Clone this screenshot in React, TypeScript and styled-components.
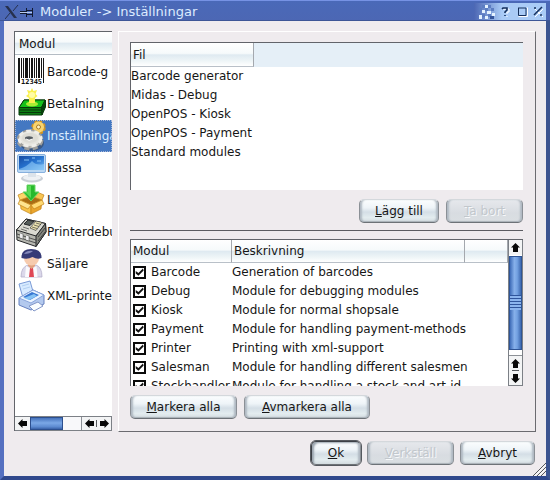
import React, { useState } from "react";
import styled, { createGlobalStyle, css } from "styled-components";

const GlobalStyle = createGlobalStyle`
  * { box-sizing: border-box; }
  body {
    margin: 0;
    background: #efebee;
    color: #161616;
    font: 12px/19px "DejaVu Sans", Verdana, sans-serif;
  }
  button { font: inherit; color: inherit; }
`;

const headerFill = "linear-gradient(#ffffff 0%, #f6fafb 45%, #dfeaf1 52%, #eef5f7 78%, #ffffff 100%)";

const Window = styled.div`
  display: flex;
  flex-direction: column;
  height: 100vh;
  min-height: 400px;
  border: solid;
  border-width: 0 4px 4px;
  border-color: #4a66b0 #3c5490 #30488c #5570c0;
  background: #efebee;
  position: relative;
`;

const TitleBar = styled.header`
  display: flex;
  align-items: center;
  height: 21px;
  margin: 0 -4px;
  padding: 2px 4px 0 5px;
  border-top: 1px solid #7692e4;
  border-bottom: 1px solid #3d5596;
  background: linear-gradient(#4a69b8, #4c67b4);
`;

const Title = styled.h1`
  flex: 1;
  margin: 0 0 0 6px;
  color: #dcebff;
  font-size: 13px;
  font-weight: normal;
  line-height: 18px;
`;

const TitleControls = styled.div`
  display: flex;
  align-items: center;
  height: 17px;
  padding-left: 4px;
  background: linear-gradient(90deg, #4c67b4, #a9cbf6 28px);
`;

const TitleButton = styled.button`
  display: flex;
  align-items: center;
  justify-content: center;
  width: 16px;
  height: 17px;
  padding: 0;
  border: 0;
  background: none;
`;

const Content = styled.main`
  display: flex;
  flex: 1;
  gap: 6px;
  min-height: 0;
  padding: 10px 10px 0;
`;

const sunken = css`
  border: solid;
  border-width: 1px 0 0 1px;
  border-color: #62646a;
  background: #fff;
`;

const Sidebar = styled.nav`
  ${sunken}
  display: flex;
  flex-direction: column;
  flex: none;
  width: 98px;
  margin-bottom: 1px;
`;

const SidebarHeader = styled.div`
  flex: none;
  height: 23px;
  padding: 3px 4px;
  border-bottom: 1px solid #b4bcc4;
  background: ${headerFill};
`;

const ModuleList = styled.ul`
  flex: 1;
  min-height: 0;
  margin: 0;
  padding: 1px 0 0;
  overflow: hidden;
  list-style: none;
`;

const ModuleButton = styled.button<{ $active: boolean }>`
  display: flex;
  align-items: center;
  width: 100%;
  height: 32px;
  padding: 0;
  overflow: hidden;
  border: 0;
  background: ${(p) => (p.$active ? "#4478c2" : "transparent")};
  color: ${(p) => (p.$active ? "#d9ecff" : "inherit")};
  outline: ${(p) => (p.$active ? "1px dotted #a8b8d8" : "none")};
  outline-offset: -1px;
  white-space: nowrap;
  text-align: left;
  svg { flex: none; }
`;

const HScroll = styled.div`
  display: flex;
  height: 15px;
  border: solid #7c8086;
  border-width: 1px 1px 1px 0;
  background: #f8f8fa;
`;

const Panel = styled.section`
  display: flex;
  flex-direction: column;
  flex: 1;
  min-width: 0;
  padding: 10px 12px 12px 11px;
  border: 1px solid #fff;
  border-right-color: #6b6b70;
  border-bottom-color: #6b6b70;
`;

const ListBox = styled.div`
  ${sunken}
  display: flex;
  flex: 1 1 0;
  min-height: 0;
  overflow: hidden;
`;

const TableClip = styled.div`
  flex: 1;
  min-width: 0;
  overflow: hidden;
`;

const Table = styled.table`
  width: 100%;
  table-layout: fixed;
  border-collapse: separate;
  border-spacing: 0;
`;

const Col = styled.col<{ $w?: number }>`
  width: ${(p) => (p.$w ? `${p.$w}px` : "auto")};
`;

const Th = styled.th<{ $plain?: boolean; $h: number }>`
  height: ${(p) => p.$h}px;
  padding: 1px 4px 0 2px;
  border-right: ${(p) => (p.$plain ? "0" : "1px solid #a4a8ae")};
  border-bottom: ${(p) => (p.$plain ? "0" : "1px solid #b9c0c8")};
  background: ${(p) => (p.$plain ? "#e5eff7" : headerFill)};
  font-weight: normal;
  text-align: left;
`;

const Td = styled.td`
  height: 19px;
  padding: 0;
  white-space: nowrap;
`;

const CheckLabel = styled.label`
  display: flex;
  align-items: center;
  gap: 5px;
  height: 19px;
  padding-left: 2px;
`;

const CheckBox = styled.input`
  appearance: none;
  flex: none;
  width: 13px;
  height: 13px;
  margin: 0;
  border: 2px solid #0a0a0a;
  background: #fff;
  &:checked::after {
    content: "";
    display: block;
    width: 9px;
    height: 9px;
    background: #111;
    clip-path: polygon(8% 38%, 38% 60%, 88% 10%, 96% 34%, 38% 92%, 8% 66%);
  }
`;

const VScroll = styled.div`
  display: flex;
  flex-direction: column;
  flex: none;
  width: 15px;
  border: solid #7c8086;
  border-width: 0 1px 1px;
  background: #fff;
`;

const ArrowButton = styled.button<{ $w: number; $h: number }>`
  display: flex;
  align-items: center;
  justify-content: center;
  flex: none;
  width: ${(p) => p.$w}px;
  height: ${(p) => p.$h}px;
  padding: 0;
  border: 0;
  background: #f3f4f5;
`;

const StepButtons = styled.div<{ $vertical?: boolean }>`
  display: flex;
  flex: none;
  align-items: center;
  flex-direction: ${(p) => (p.$vertical ? "column" : "row")};
  border: solid #8c9096;
  border-width: ${(p) => (p.$vertical ? "1px 0 0" : "0 0 0 1px")};
  background: #f3f4f5;
`;

const StepMark = styled.span<{ $vertical?: boolean }>`
  width: ${(p) => (p.$vertical ? 7 : 1)}px;
  height: ${(p) => (p.$vertical ? 1 : 7)}px;
  background: #55585c;
`;

const VThumb = styled.div`
  display: flex;
  flex-direction: column;
  align-items: stretch;
  justify-content: center;
  flex: 1;
  margin: 1px 0 5px;
  border: 1px solid #2f5596;
  background: linear-gradient(90deg, #3e6cb8, #86b0ea 40%, #74a2e2 65%, #3c68b0);
`;

const Grip = styled.div`
  height: 15px;
  background: repeating-linear-gradient(#2f559c 0 1px, #8ab4ee 1px 3px);
`;

const HThumb = styled.div`
  width: 33px;
  border: 1px solid #2c4f8e;
  background: linear-gradient(#4673bc, #7ba8e6 45%, #5c8ad0 80%, #3a62a8);
`;

const HGap = styled.div`
  flex: 1;
`;

const Divider = styled.hr`
  width: 100%;
  margin: 7px 0 8px;
  border: 0;
  border-top: 1px solid #5c5c62;
`;

const ButtonRow = styled.div<{ $end?: boolean }>`
  display: flex;
  flex: none;
  gap: 7px;
  justify-content: ${(p) => (p.$end ? "flex-end" : "flex-start")};
  padding-top: 9px;
`;

const PushButton = styled.button<{ $w: number; $default?: boolean }>`
  width: ${(p) => p.$w}px;
  height: 24px;
  padding: 0;
  border: 1px solid #8b9096;
  border-top-color: #d4d8dc;
  border-bottom-color: #6d7277;
  border-radius: 5px;
  background: linear-gradient(#fbfdfe, #eef4f8 35%, #d4dee6 55%, #e3ecef 80%, #d3dce0);
  box-shadow: inset 3px 0 2px -1px #b0b9c2, inset -3px 0 2px -1px #b0b9c2, inset 0 -1px 1px #a8b0b6;
  line-height: 22px;
  white-space: nowrap;
  ${(p) =>
    p.$default &&
    css`
      border-color: #3c4046 #8b9096 #6d7277 #3c4046;
      outline: 1px solid #55595f;
      box-shadow: inset 3px 2px 2px -1px #9aa4ae, inset -3px 0 2px -1px #b0b9c2;
    `}
  &:disabled {
    background: linear-gradient(#e6e8ec, #d8dce1 60%, #dadfe2);
    color: #c2c7cc;
    text-shadow: 1px 1px 0 #f6f8fa;
  }
`;

const Footer = styled.footer`
  display: flex;
  flex: none;
  gap: 6px;
  justify-content: flex-end;
  padding: 9px 11px 11px;
`;

const ResizeGrip = styled.svg`
  position: absolute;
  right: 0;
  bottom: 0;
`;

function BarcodeIcon() {
  const bars = [
    [3, 2], [6, 1], [8, 1], [10, 3], [14, 1], [16, 2], [19, 1], [21, 1], [23, 2], [26, 1], [28, 1],
  ];
  return (
    <svg width="32" height="32">
      {bars.map(([x, w]) => (
        <rect key={x} x={x} y="2" width={w} height={x === 3 || x === 28 ? 25 : 20} fill="#151515" />
      ))}
      <text x="6" y="28" fontFamily="DejaVu Sans Mono, monospace" fontWeight="bold" fontSize="7" fill="#111">12345</text>
    </svg>
  );
}

function MoneyIcon() {
  return (
    <svg width="32" height="32">
      <g stroke="#06380a" strokeWidth="1" strokeLinejoin="round">
        <path d="M4 20 9 12h21l-3 8v7H4z" fill="#0a7d12" />
        <path d="M4 19.500 9 12h21l-3.500 7.500z" fill="#14c21a" />
        <path d="M26.500 19.500 30.500 12v7L27 27z" fill="#075c0b" />
        <path d="M4 22h22.500l4-7M4 24.500h22.500l4-7" fill="none" />
      </g>
      <ellipse cx="17" cy="16" rx="6" ry="2.500" fill="#a7ee34" />
      <path d="m17 0 1.500 3L22 2l-1.500 4 2 2-2.500 2v5h-6v-5l-3-2 2.500-2L12 2l3.500 1z" fill="#f9f04c" />
      <circle cx="17" cy="7" r="3" fill="#fffca4" />
    </svg>
  );
}

function GearsIcon() {
  return (
    <svg width="32" height="32">
      <ellipse cx="17" cy="23" rx="12" ry="8" fill="#33445c" opacity=".6" />
      <circle cx="23.500" cy="7.500" r="6" fill="#eeb83a" stroke="#d29522" strokeWidth="2.500" strokeDasharray="3 1.700" />
      <circle cx="23.500" cy="7" r="5.500" fill="#f8d470" />
      <circle cx="23.500" cy="7" r="2" fill="#fff2c2" stroke="#a97a22" />
      <ellipse cx="15" cy="20" rx="11.500" ry="8.500" fill="#b9b8b2" stroke="#9f9f9c" strokeWidth="4" strokeDasharray="5 3.100" />
      <ellipse cx="15" cy="18.500" rx="11" ry="7.500" fill="#e6e5de" stroke="#efeee9" strokeWidth="3" strokeDasharray="5 3" />
      <ellipse cx="15" cy="18" rx="8" ry="5" fill="#dddcd5" />
      <ellipse cx="14" cy="18" rx="4" ry="1.800" fill="#555b61" />
      <path d="M11 19q3 2.500 6.500 0" stroke="#fff" fill="none" />
    </svg>
  );
}

function ScreenIcon() {
  return (
    <svg width="32" height="32">
      <defs>
        <linearGradient id="screen" x1="0" y1="0" x2="1" y2="1">
          <stop offset="0" stopColor="#164ba2" /><stop offset=".5" stopColor="#2673cf" /><stop offset="1" stopColor="#7ec2f5" />
        </linearGradient>
      </defs>
      <ellipse cx="17" cy="26.500" rx="11" ry="4" fill="#c9cfd6" />
      <ellipse cx="17" cy="25.500" rx="9" ry="3" fill="#eef1f4" />
      <path d="M13 19h8v6h-8z" fill="#dce3ea" />
      <rect x="2.500" y="2.500" width="28" height="18" rx="1.500" fill="#b9d7f3" stroke="#87b0dd" />
      <rect x="4" y="4" width="25" height="14" fill="url(#screen)" />
      <path d="M4 17q9-3 13-8 4 5 12 3v6H4z" fill="#93cdf8" opacity=".6" />
      <path d="M9 8h5M17 6h3M22 9h4" stroke="#87c4f6" />
    </svg>
  );
}

function BoxIcon() {
  return (
    <svg width="32" height="32">
      <g stroke="#c1831a" strokeWidth=".7" strokeLinejoin="round">
        <path d="M5 16 16 12l11 4-11 5z" fill="#a86d15" />
        <path d="M5 16 16 21v9L6 25z" fill="#f7c247" />
        <path d="M27 16 16 21v9l10-5z" fill="#eaa52c" />
        <path d="M5 16 16 21l-3 4-10-5z" fill="#ffe590" />
        <path d="M27 16 16 21l3 4 10-5z" fill="#ffda74" />
        <path d="M5 16 3 11l7-3 6 4z" fill="#fdd56a" />
        <path d="m27 16 2-5-7-3-6 4z" fill="#f8c553" />
      </g>
      <path d="M12 1h8v7h4l-8 9-8-9h4z" fill="#28b92c" stroke="#68d865" />
      <path d="M13 2h3v12l-6-6h3z" fill="#5adb57" />
    </svg>
  );
}

function RegisterIcon() {
  return (
    <svg width="32" height="32" stroke="#26282a" strokeLinejoin="round">
      <path d="M1.500 14 11 3l19.500 4.500L31 16 21 30.500 2 24z" fill="#b5b6af" />
      <path d="M1.500 14 11 3l19.500 4.500L21 20z" fill="#d9d9d1" />
      <path d="M21 20 30.500 7.500 31 16 21 30.500z" fill="#85877f" />
      <path d="m9 8 4-4 6 1.500-4 4z" fill="#555c59" />
      <path d="m15 12 6-7 6 1.500-6 8z" fill="#ece3b1" strokeWidth=".6" />
      <path d="m17 11 5 1.500M19 9l5 1.500M21 7l5 1.500M6 13l6 2M8 11l6 2" strokeWidth=".6" />
      <path d="M2 18 21 24M2 21l19 6M23 21l7-9M23 25l7-9" fill="none" strokeWidth=".7" />
      <path d="m5 17 3 1v5l-3-1M11 19l3 1v5l-3-1" fill="#eee" strokeWidth=".4" />
    </svg>
  );
}

function PersonIcon() {
  return (
    <svg width="32" height="32">
      <path d="M6 29q0-10 7-12h8q6 2 6 12z" fill="#dbd8ea" stroke="#b5b0ca" strokeWidth=".8" />
      <path d="m11 18 5.500 3 5-3 1 11H10z" fill="#fafafd" />
      <path d="m15 20 3 0 1 9h-5z" fill="#df4856" />
      <path d="M13 14h7v4l-3.500 3L13 18z" fill="#e1a27f" />
      <ellipse cx="16.500" cy="10.500" rx="7.500" ry="7" fill="#f6cbae" />
      <path d="M6.500 10Q6 1 16 1q11 0 10.500 9-4 2-9-1-5 3-11 1z" fill="#363b77" />
      <path d="M9 6q3-4 9-3-3 3-9 3z" fill="#8489bb" />
    </svg>
  );
}

function PrinterIcon() {
  return (
    <svg width="32" height="32" strokeLinejoin="round">
      <path d="M4 4 15 1l4 14-11 3z" fill="#d7eaff" stroke="#7b9bd6" />
      <path d="m7 6 7-2M8 9l7-2" stroke="#b2cff0" />
      <path d="m4 18 14-8 11 5v9l-13 6-12-5z" fill="#b3c9ee" stroke="#6681c0" />
      <path d="m4 18 14-8 11 5-13 8z" fill="#ebf4ff" stroke="#8aa6dc" />
      <path d="m8 17 9-5 7 3-9 5z" fill="#3978d2" />
      <path d="m9 18 10-4 3 2-8 4z" fill="#86c3f5" />
      <path d="m14 26 9-4 5 4-9 5z" fill="#fafdff" stroke="#8397c8" />
    </svg>
  );
}

function Arrow({ turn }: { turn: number }) {
  return (
    <svg width="9" height="9" viewBox="0 0 9 9">
      <path d="M4.500 0 9 4.500H7V9H2V4.500H0z" fill="#080808" transform={`rotate(${turn} 4.500 4.500)`} />
    </svg>
  );
}

const modules = [
  { name: "Barcode-g", Icon: BarcodeIcon },
  { name: "Betalning", Icon: MoneyIcon },
  { name: "Inställningar", Icon: GearsIcon },
  { name: "Kassa", Icon: ScreenIcon },
  { name: "Lager", Icon: BoxIcon },
  { name: "Printerdebu", Icon: RegisterIcon },
  { name: "Säljare", Icon: PersonIcon },
  { name: "XML-printe", Icon: PrinterIcon },
];

const files = ["Barcode generator", "Midas - Debug", "OpenPOS - Kiosk", "OpenPOS - Payment", "Standard modules"];

const plugins = [
  ["Barcode", "Generation of barcodes"],
  ["Debug", "Module for debugging modules"],
  ["Kiosk", "Module for normal shopsale"],
  ["Payment", "Module for handling payment-methods"],
  ["Printer", "Printing with xml-support"],
  ["Salesman", "Module for handling different salesmen"],
  ["Stockhandler", "Module for handling a stock and art-id"],
];

export default function App() {
  const [active, setActive] = useState("Inställningar");
  const [enabled, setEnabled] = useState<string[]>(plugins.map(([name]) => name));
  const toggle = (name: string) =>
    setEnabled((list) => (list.includes(name) ? list.filter((n) => n !== name) : [...list, name]));

  return (
    <>
      <GlobalStyle />
      <Window>
        <TitleBar>
          <svg width="14" height="14" fill="none">
            <path d="M0 1h3l9 12h-3z" fill="#26304e" />
            <path d="M13 0 8 6M5 8l-5 6" stroke="#26304e" />
          </svg>
          <svg width="15" height="14" fill="none" stroke="#111a30">
            <path d="M1 6.500h6M1 8.500h6M7.500 3v9M7 5.500h6M7 9.500h6M13.500 3v9" />
            <path d="M1 7.500h12" stroke="#b9cbed" />
          </svg>
          <Title>Moduler -&gt; Inställningar</Title>
          <TitleControls>
            <svg width="20" height="16">
              <path d="M4 1h3v3H4zM10 1h3v3h-3zM1 4h3v3H1zM7 4h3v3H7zM13 4h3v3h-3zM4 10h3v3H4zM10 10h3v3h-3z" fill="#5c7dc1" />
              <path d="M7 1h3v3H7zM4 6h3v3H4zM9 7h4v3H9zM1 11h3v4H1zM7 12h3v3H7zM14 9h3v3h-3z" fill="#e4f2ff" />
              <path d="M12 12h4v3h-4z" fill="#35559b" />
            </svg>
            <TitleButton aria-label="Hjälp">
              <svg width="10" height="11" fill="none">
                <path d="M3 4V3h5v3H6v2M6 10v1" stroke="#fff" />
                <path d="M1 3 2 2h4v2L4 6v1M4 9v1" stroke="#15305c" strokeWidth="1.600" />
              </svg>
            </TitleButton>
            <TitleButton aria-label="Maximera">
              <svg width="11" height="11" fill="none">
                <path d="M1.500 10.500h9v-9" stroke="#fff" />
                <path d="M1 2h8M1.500 2v7.500h7.500V2" stroke="#15305c" />
              </svg>
            </TitleButton>
            <TitleButton aria-label="Stäng">
              <svg width="11" height="11" fill="none">
                <path d="m2 3 8 8M10 3l-8 8" stroke="#fff" />
                <path d="M1 2h2M7 9h2M9 1 1 9" stroke="#15305c" strokeWidth="1.500" />
              </svg>
            </TitleButton>
          </TitleControls>
        </TitleBar>

        <Content>
          <Sidebar aria-label="Moduler">
            <SidebarHeader>Modul</SidebarHeader>
            <ModuleList>
              {modules.map(({ name, Icon }) => (
                <li key={name}>
                  <ModuleButton $active={name === active} onClick={() => setActive(name)}>
                    <Icon />
                    {name}
                  </ModuleButton>
                </li>
              ))}
            </ModuleList>
            <HScroll>
              <ArrowButton $w={15} $h={13} aria-label="Vänster"><Arrow turn={-90} /></ArrowButton>
              <HThumb />
              <HGap />
              <StepButtons>
                <ArrowButton $w={14} $h={13} aria-label="Bläddra vänster"><Arrow turn={-90} /></ArrowButton>
                <StepMark />
                <ArrowButton $w={14} $h={13} aria-label="Bläddra höger"><Arrow turn={90} /></ArrowButton>
              </StepButtons>
            </HScroll>
          </Sidebar>

          <Panel>
            <ListBox>
              <TableClip>
                <Table>
                  <colgroup><Col $w={123} /><Col /></colgroup>
                  <thead><tr><Th $h={24}>Fil</Th><Th $h={24} $plain /></tr></thead>
                  <tbody>
                    {files.map((file) => (
                      <tr key={file}><Td>{file}</Td><Td /></tr>
                    ))}
                  </tbody>
                </Table>
              </TableClip>
            </ListBox>
            <ButtonRow $end>
              <PushButton $w={80}><u>L</u>ägg till</PushButton>
              <PushButton $w={77} disabled><u>T</u>a bort</PushButton>
            </ButtonRow>
            <Divider />
            <ListBox>
              <TableClip>
                <Table>
                  <colgroup><Col $w={101} /><Col $w={233} /><Col /></colgroup>
                  <thead><tr><Th $h={23}>Modul</Th><Th $h={23}>Beskrivning</Th><Th $h={23} /></tr></thead>
                  <tbody>
                    {plugins.map(([name, text]) => (
                      <tr key={name}>
                        <Td>
                          <CheckLabel>
                            <CheckBox type="checkbox" checked={enabled.includes(name)} onChange={() => toggle(name)} />
                            {name}
                          </CheckLabel>
                        </Td>
                        <Td>{text}</Td>
                        <Td />
                      </tr>
                    ))}
                  </tbody>
                </Table>
              </TableClip>
              <VScroll>
                <ArrowButton $w={13} $h={15} aria-label="Upp"><Arrow turn={0} /></ArrowButton>
                <VThumb><Grip /></VThumb>
                <StepButtons $vertical>
                  <ArrowButton $w={13} $h={14} aria-label="Bläddra upp"><Arrow turn={0} /></ArrowButton>
                  <StepMark $vertical />
                  <ArrowButton $w={13} $h={14} aria-label="Bläddra ner"><Arrow turn={180} /></ArrowButton>
                </StepButtons>
              </VScroll>
            </ListBox>
            <ButtonRow>
              <PushButton $w={107} onClick={() => setEnabled(plugins.map(([name]) => name))}><u>M</u>arkera alla</PushButton>
              <PushButton $w={126} onClick={() => setEnabled([])}><u>A</u>vmarkera alla</PushButton>
            </ButtonRow>
          </Panel>
        </Content>

        <Footer>
          <PushButton $w={50} $default><u>O</u>k</PushButton>
          <PushButton $w={87} disabled><u>V</u>erkställ</PushButton>
          <PushButton $w={75}><u>A</u>vbryt</PushButton>
        </Footer>
        <ResizeGrip width="13" height="13" fill="none">
          <path d="M0 13 13 0M4 13l9-9M8 13l5-5" stroke="#55575c" />
          <path d="M1.500 13 13 1.500M5.500 13 13 5.500" stroke="#fff" />
        </ResizeGrip>
      </Window>
    </>
  );
}
